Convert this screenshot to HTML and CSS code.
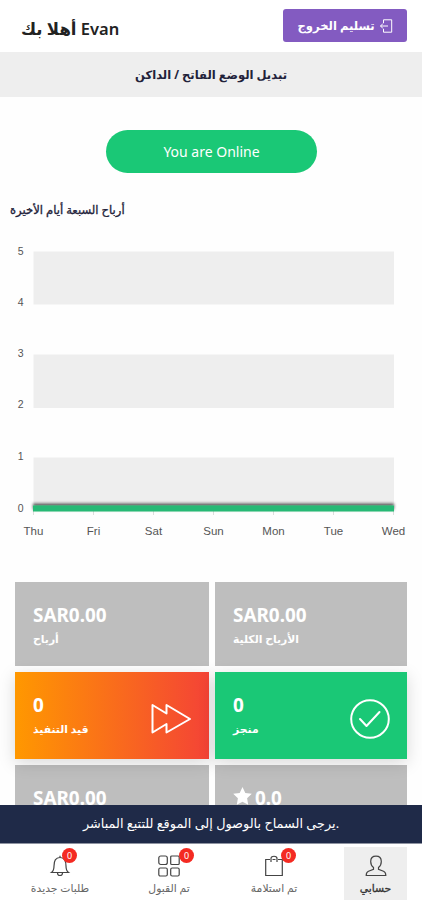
FILE: index.html
```html
<!DOCTYPE html>
<html lang="ar">
	<head>
		<meta charset="utf-8">
		<title>حسابي</title>
		<meta name="viewport" content="width=device-width, initial-scale=1">
		<link rel="stylesheet" href="styles.css">
	</head>
	<body>
		<header class="topbar">
			<h1>أهلا بك Evan</h1>
			<button class="logout">
				<span>تسليم الخروج</span>
				<svg width="14" height="14" viewBox="0 0 14 14"><path d="M4.500 4V.8h8.200v12.400H4.500V10M9 7H1.500M4 4.500 1.500 7 4 9.500"/></svg>
			</button>
		</header>
		<div class="mode">تبديل الوضع الفاتح / الداكن</div>
		<button class="status">You are Online</button>
		<h2>أرباح السبعة أيام الأخيرة</h2>
		<svg class="chart" width="422" height="310" viewBox="0 230 422 310">
			<defs>
				<filter id="shadow" x="-5%" y="-200%" width="110%" height="500%">
					<feDropShadow dx="0" dy="-2" stdDeviation="1.5" flood-color="#000" flood-opacity=".65"/>
				</filter>
			</defs>
			<g class="bands">
				<rect x="33.5" y="251.5" width="360.5" height="53"/>
				<rect x="33.5" y="354.5" width="360.5" height="53.5"/>
				<rect x="33.5" y="457.5" width="360.5" height="51"/>
			</g>
			<path class="ticks" d="M33.5 511v4M93.5 511v4M153.5 511v4M213.5 511v4M273.5 511v4M333.5 511v4M393.5 511v4"/>
			<rect class="line" x="33" y="505.5" width="361" height="6" filter="url(#shadow)"/>
			<g class="yaxis">
				<text x="23.5" y="254.5">5</text>
				<text x="23.5" y="305.5">4</text>
				<text x="23.5" y="357">3</text>
				<text x="23.5" y="408">2</text>
				<text x="23.5" y="460">1</text>
				<text x="23.5" y="511.5">0</text>
			</g>
			<g class="xaxis">
				<text x="33.5" y="534.5">Thu</text>
				<text x="93.5" y="534.5">Fri</text>
				<text x="153.5" y="534.5">Sat</text>
				<text x="213.5" y="534.5">Sun</text>
				<text x="273.5" y="534.5">Mon</text>
				<text x="333.5" y="534.5">Tue</text>
				<text x="393.5" y="534.5">Wed</text>
			</g>
		</svg>
		<main class="cards">
			<div class="card">
				<div><b>SAR0.00</b><p>أرباح</p></div>
			</div>
			<div class="card">
				<div><b>SAR0.00</b><p>الأرباح الكلية</p></div>
			</div>
			<div class="card orange">
				<div><b>0</b><p>قيد التنفيذ</p></div>
				<svg width="40" height="32" viewBox="0 0 40 32"><path d="M1.500 2v27.500L15.500 21v8.500L39 16 15.500 2v8.500Z"/></svg>
			</div>
			<div class="card green">
				<div><b>0</b><p>منجز</p></div>
				<svg width="40" height="40" viewBox="0 0 40 40"><circle cx="20" cy="20" r="18.800"/><path d="m10 20 6.500 7L29.500 13"/></svg>
			</div>
			<div class="card">
				<div><b>SAR0.00</b></div>
			</div>
			<div class="card">
				<div><b><svg class="star" width="19" height="18" viewBox="0 0 19 18"><path d="m9.500 0 2.800 5.900 6.500.9-4.700 4.500 1.100 6.500-5.700-3.100-5.700 3.100 1.100-6.500L.2 6.800l6.500-.9Z"/></svg>0.0</b></div>
			</div>
		</main>
		<footer>
			<div class="toast">يرجى السماح بالوصول إلى الموقع للتتبع المباشر.</div>
			<nav>
				<a class="item orders">
					<span class="icon">
						<svg width="22" height="22" viewBox="0 0 22 22"><path d="M2.500 17.500h17c-2-1.500-2.500-3-2.500-6.500C17 6 15.500 2.500 11 2.500S5 6 5 11c0 3.500-.5 5-2.500 6.500ZM8.500 18c0 3.300 5 3.300 5 0M11 .8v1.700"/></svg>
						<i>0</i>
					</span>
					<span>طلبات جديدة</span>
				</a>
				<a class="item accepted">
					<span class="icon">
						<svg width="22" height="22" viewBox="0 0 22 22"><rect x=".8" y="1" width="8.500" height="8.500" rx="2"/><rect x="12.700" y="1" width="8.500" height="8.500" rx="1"/><rect x=".8" y="13" width="8.500" height="8" rx="1.500"/><rect x="12.700" y="13" width="8.500" height="8" rx="1.500"/></svg>
						<i>0</i>
					</span>
					<span>تم القبول</span>
				</a>
				<a class="item picked">
					<span class="icon">
						<svg width="22" height="22" viewBox="0 0 22 22"><path d="M7 4.500H2.700v16h16.600v-16H15M9.500 4.500h3M8 7V3.500C8 .5 14 .5 14 3.500V7"/></svg>
						<i>0</i>
					</span>
					<span>تم استلامة</span>
				</a>
				<a class="item active">
					<span class="icon">
						<svg width="22" height="22" viewBox="0 0 22 22"><path d="M8.500 12.500C6.500 11 5.700 9 5.700 6.500 5.700 3 7.800 1.200 11 1.200S16.300 3 16.300 6.500c0 2.500-.8 4.500-2.800 6v1.800l5 2c1.700.7 2.300 1.700 2.300 4.200H1.200c0-2.500.6-3.500 2.300-4.200l5-2Z"/></svg>
					</span>
					<span>حسابي</span>
				</a>
			</nav>
		</footer>
	</body>
</html>
```

FILE: styles.css
```css
* {box-sizing:border-box;}
body {margin:0;height:900px;overflow:hidden;background:#fefefe;color:#22223a;font-family:"Noto Sans","DejaVu Sans",sans-serif;}
button {border:0;padding:0;font-family:inherit;color:#fff;}
.topbar {display:flex;justify-content:space-between;height:52px;padding:9px 15px 0 21px;background:#fff;}
.topbar h1 {margin:5px 0 0;font-size:16.5px;line-height:30px;font-weight:600;color:#222;}
.logout {display:flex;align-items:center;justify-content:center;gap:4px;width:124px;height:33px;border-radius:3px;background:#835bc1;font-size:11.6px;font-weight:bold;}
.logout svg {fill:none;stroke:#fff;stroke-width:1;}
.mode {height:45px;line-height:45px;background:#eee;text-align:center;font-size:11.6px;font-weight:bold;}
.status {display:block;width:211px;height:43px;margin:33px auto 0 106px;border-radius:22px;background:#1ac876;font-size:14px;}
h2 {margin:27px 0 0 10px;height:20px;line-height:20px;font-size:11.6px;font-weight:normal;-webkit-text-stroke:.3px #22223a;}
.chart {display:block;margin-top:10px;font-family:"Liberation Sans",sans-serif;font-size:11px;}
.bands {fill:#eee;}
.ticks {stroke:#ddd;stroke-width:1;}
.line {fill:#28b974;}
.yaxis {fill:#555;text-anchor:end;font-size:10.5px;}
.xaxis {fill:#555;text-anchor:middle;font-size:11.5px;}
.cards {display:grid;grid-template-columns:194px 192px;grid-template-rows:84px 87px 87px;gap:6px;margin:42px 15px 0;}
.card {display:flex;justify-content:space-between;padding:20px 18px 0;background:#bebebe;color:#fff;}
.card b {display:flex;align-items:center;gap:3px;height:26px;font-size:18.9px;line-height:26px;}
.card p {margin:1px 0 0;font-size:10.8px;line-height:20px;font-weight:bold;}
.card svg {fill:none;stroke:#fff;stroke-width:2;stroke-linejoin:round;stroke-linecap:round;}
.card .star {margin-top:-4px;fill:#fff;stroke:none;}
.orange {z-index:1;background:linear-gradient(90deg,#ff9800,#f44336);box-shadow:0 4px 16px rgba(0,0,0,.15);}
.green {z-index:1;background:#1ac876;box-shadow:0 4px 16px rgba(0,0,0,.15);}
.orange svg {margin-top:11px;}
.green svg {margin:7px -1px 0 0;}
footer {position:fixed;left:0;right:0;bottom:0;z-index:2;background:#fff;}
.toast {height:39px;line-height:37px;background:#1f2a48;border-bottom:1px solid #8e93a1;color:#fff;text-align:center;font-size:12.85px;}
nav {display:grid;grid-template-columns:120px 98px 126px 63px;height:56px;padding-top:3px;}
.item {display:flex;flex-direction:column;align-items:center;padding-top:8px;color:#666;font-size:10.8px;line-height:22px;}
.icon {position:relative;width:22px;height:22px;}
.icon svg {display:block;fill:none;stroke:#444;stroke-width:1.2;}
.icon i {position:absolute;left:13px;top:-7px;width:15px;height:15px;border-radius:50%;background:#f42a22;color:#fff;text-align:center;font-size:9px;line-height:15px;font-style:normal;}
.accepted .icon i {left:21px;}
.picked {padding-right:14px;}
.picked .icon i {left:18px;}
.active {background:#eee;color:#333;}
.active span {-webkit-text-stroke:.3px #333;}
```
